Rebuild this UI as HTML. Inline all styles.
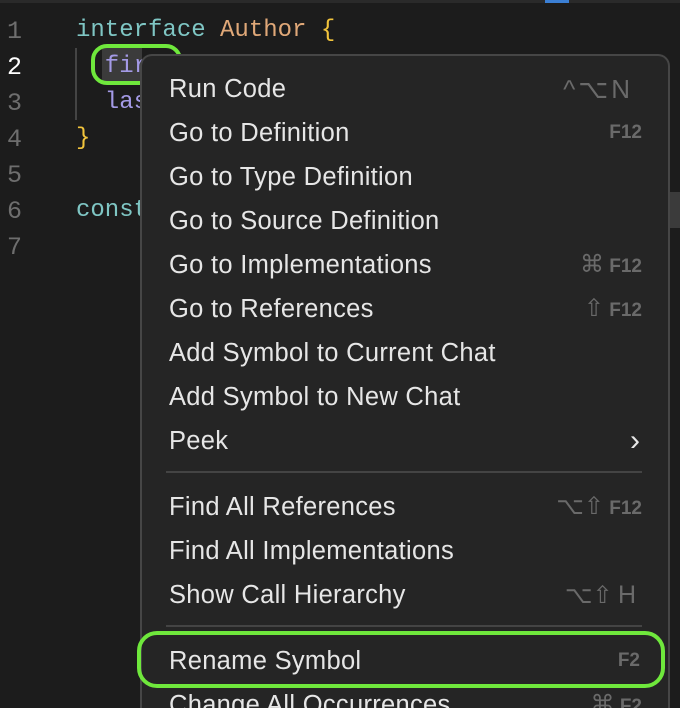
<!DOCTYPE html>
<html style="height:708px;overflow:hidden"><head><meta charset="utf-8"><style>
body{margin:0;width:680px;height:708px;overflow:hidden;background:#1c1c1c;position:relative;font-family:"Liberation Sans",sans-serif}
.ln{position:absolute;left:0;width:22px;text-align:right;font:25px "Liberation Mono",monospace;color:#6e6e6e}
.code{position:absolute;left:76px;font:24px "Liberation Mono",monospace;white-space:pre}
.menu{position:absolute;left:140px;top:54px;width:530px;height:654px;background:#252525;border:2px solid #464646;border-bottom:none;border-radius:12px 12px 0 0;box-sizing:border-box;overflow:hidden}
.it{position:absolute;left:27px;right:26px;height:44px;color:#e6e6e6;font-size:25.5px;letter-spacing:0.3px;line-height:44px;white-space:nowrap}
.sc{position:absolute;right:0;top:0;color:#6a6a6a;font-size:19px;font-weight:bold;letter-spacing:0}
.g{font-weight:normal;font-size:24px}
.sep{position:absolute;left:24px;right:26px;height:2px;background:#444}
.ring{position:absolute;border:4px solid #6fe83c;border-radius:16px;box-sizing:border-box}
</style></head><body>
<div style="position:absolute;top:0;left:0;width:680px;height:3px;background:#2a2a2a"></div>
<div style="position:absolute;top:0;left:545px;width:24px;height:3px;background:#3b7fd4"></div>
<div class="ln" style="top:17px">1</div>
<div class="ln" style="top:53px;color:#fff">2</div>
<div class="ln" style="top:89px">3</div>
<div class="ln" style="top:125px">4</div>
<div class="ln" style="top:161px">5</div>
<div class="ln" style="top:197px">6</div>
<div class="ln" style="top:233px">7</div>
<div style="position:absolute;left:75px;top:48px;width:2px;height:72px;background:#444"></div>
<div style="position:absolute;left:102px;top:48px;width:40px;height:34px;background:#3b3b3b"></div>
<div class="code" style="top:17px"><span style="color:#7fc6c4">interface</span> <span style="color:#e0a878">Author</span> <span style="color:#f2c43c">{</span></div>
<div class="code" style="top:53px;color:#a49ae6">  fir</div>
<div class="code" style="top:89px;color:#a49ae6">  las</div>
<div class="code" style="top:125px;color:#f2c43c">}</div>
<div class="code" style="top:197px;color:#7fc6c4">const</div>
<div style="position:absolute;left:670px;top:192px;width:10px;height:36px;background:#3b3b3b"></div>
<div class="ring" style="left:91px;top:44px;width:91px;height:41px"></div>
<div class="menu">
<div class="it" style="top:11px">Run Code<span class="sc g" style="font-size:26px;right:9px;letter-spacing:3px">^⌥N</span></div>
<div class="it" style="top:55px">Go to Definition<span class="sc">F12</span></div>
<div class="it" style="top:99px">Go to Type Definition</div>
<div class="it" style="top:143px">Go to Source Definition</div>
<div class="it" style="top:187px">Go to Implementations<span class="sc"><span class="g">⌘</span> F12</span></div>
<div class="it" style="top:231px">Go to References<span class="sc"><span class="g">⇧</span> F12</span></div>
<div class="it" style="top:275px">Add Symbol to Current Chat</div>
<div class="it" style="top:319px">Add Symbol to New Chat</div>
<div class="it" style="top:363px">Peek<span class="sc g" style="color:#e6e6e6;font-size:30px;right:2px">›</span></div>
<div class="sep" style="top:415px"></div>
<div class="it" style="top:429px">Find All References<span class="sc"><span class="g">⌥⇧</span> F12</span></div>
<div class="it" style="top:473px">Find All Implementations</div>
<div class="it" style="top:517px">Show Call Hierarchy<span class="sc" style="right:6px"><span class="g">⌥⇧</span> <span class="g" style="font-size:25px">H</span></span></div>
<div class="sep" style="top:569px"></div>
<div class="it" style="top:583px">Rename Symbol<span class="sc" style="right:2px">F2</span></div>
<div class="it" style="top:627px">Change All Occurrences<span class="sc"><span class="g">⌘</span> F2</span></div>
</div>
<div class="ring" style="left:137px;top:631px;width:528px;height:57px;border-radius:20px"></div>
</body></html>
